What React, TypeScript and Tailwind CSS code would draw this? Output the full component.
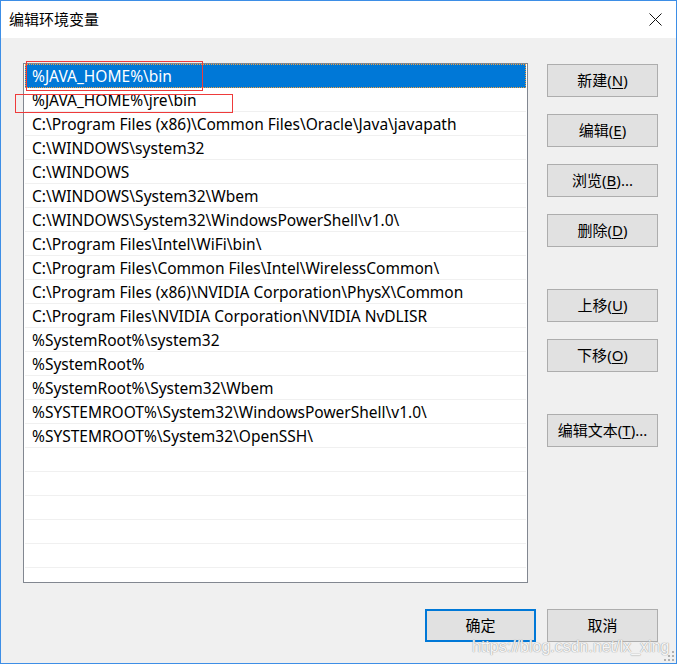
import React from "react";

const rows = [
  "%JAVA_HOME%\\bin",
  "%JAVA_HOME%\\jre\\bin",
  "C:\\Program Files (x86)\\Common Files\\Oracle\\Java\\javapath",
  "C:\\WINDOWS\\system32",
  "C:\\WINDOWS",
  "C:\\WINDOWS\\System32\\Wbem",
  "C:\\WINDOWS\\System32\\WindowsPowerShell\\v1.0\\",
  "C:\\Program Files\\Intel\\WiFi\\bin\\",
  "C:\\Program Files\\Common Files\\Intel\\WirelessCommon\\",
  "C:\\Program Files (x86)\\NVIDIA Corporation\\PhysX\\Common",
  "C:\\Program Files\\NVIDIA Corporation\\NVIDIA NvDLISR",
  "%SystemRoot%\\system32",
  "%SystemRoot%",
  "%SystemRoot%\\System32\\Wbem",
  "%SYSTEMROOT%\\System32\\WindowsPowerShell\\v1.0\\",
  "%SYSTEMROOT%\\System32\\OpenSSH\\",
  "",
  "",
  "",
  "",
  "",
  "",
];

function Btn({
  label,
  m,
  rest = "",
  primary = false,
  className = "",
}: {
  label: string;
  m?: string;
  rest?: string;
  primary?: boolean;
  className?: string;
}) {
  return (
    <div
      className={
        "w-[111px] h-[33px] flex items-center justify-center bg-[#e1e1e1] text-[15px] text-black " +
        (primary ? "border-2 border-[#0078d7] " : "border border-[#adadad] ") +
        className
      }
    >
      <span>
        {label}
        {m !== undefined && (
          <>
            (<span className="underline underline-offset-2">{m}</span>)
          </>
        )}
        {rest}
      </span>
    </div>
  );
}

export default function App() {
  return (
    <div
      className="relative w-[677px] h-[664px] border border-[#3d8ee6] bg-[#f0f0f0] flex flex-col overflow-hidden"
      style={{ fontFamily: '"Noto Sans", "Noto Sans CJK SC", sans-serif' }}
    >
      {/* title bar */}
      <div className="h-[37px] bg-white flex items-center justify-between pl-[8px] pr-[14px] shrink-0">
        <span className="text-[15px] text-black">编辑环境变量</span>
        <svg width="13" height="13" viewBox="0 0 13 13">
          <path d="M0.5 0.5 L12.5 12.5 M12.5 0.5 L0.5 12.5" stroke="#111" strokeWidth="1" />
        </svg>
      </div>

      {/* body */}
      <div className="flex flex-col pl-[22px] pr-[18px]">
        <div className="flex mt-[25px]">
          {/* list box */}
          <div className="w-[505px] h-[520px] border border-[#828790] bg-white px-[1px] overflow-hidden">
            {rows.map((r, i) => (
              <div
                key={i}
                className={
                  "h-[24px] flex items-center pl-[7px] pt-[2px] text-[15.5px] whitespace-nowrap border-b " +
                  (i === 0
                    ? "bg-[#0078d7] text-white border-[#0078d7] outline outline-1 outline-dotted outline-[#f0a040] -outline-offset-1"
                    : "text-black border-[#f0f0f0]")
                }
              >
                {r}
              </div>
            ))}
          </div>

          {/* right buttons */}
          <div className="flex flex-col ml-[19px] mt-[1px] gap-[17px]">
            <Btn label="新建" m="N" />
            <Btn label="编辑" m="E" />
            <Btn label="浏览" m="B" rest="..." />
            <Btn label="删除" m="D" />
            <Btn label="上移" m="U" className="mt-[25px]" />
            <Btn label="下移" m="O" />
            <Btn label="编辑文本" m="T" rest="..." className="mt-[25px]" />
          </div>
        </div>

        {/* bottom buttons */}
        <div className="flex justify-end gap-[11px] mt-[26px]">
          <Btn label="确定" primary />
          <Btn label="取消" />
        </div>
      </div>

      {/* red annotation boxes */}
      <div className="absolute left-[25px] top-[60px] w-[177px] h-[30px] border border-[#ee3b3b] pointer-events-none" />
      <div className="absolute left-[14px] top-[93px] w-[218px] h-[19px] border border-[#ee3b3b] pointer-events-none" />

      {/* watermark */}
      <div
        className="absolute left-[471px] top-[634px] text-[16px] text-white/90 whitespace-nowrap"
        style={{
          fontFamily: '"Liberation Sans", Arial, sans-serif',
          textShadow: "0 0 1px #9a9a9a, 0 0 1px #9a9a9a",
        }}
      >
        https://blog.csdn.net/lx_xing
      </div>

      {/* resize grip */}
      <svg className="absolute right-[1px] bottom-[1px]" width="12" height="12" viewBox="0 0 12 12">
        {[
          [9, 1],
          [5, 5],
          [9, 5],
          [1, 9],
          [5, 9],
          [9, 9],
        ].map(([x, y], i) => (
          <rect key={i} x={x} y={y} width="2" height="2" fill="#b0b0b0" />
        ))}
      </svg>
    </div>
  );
}
